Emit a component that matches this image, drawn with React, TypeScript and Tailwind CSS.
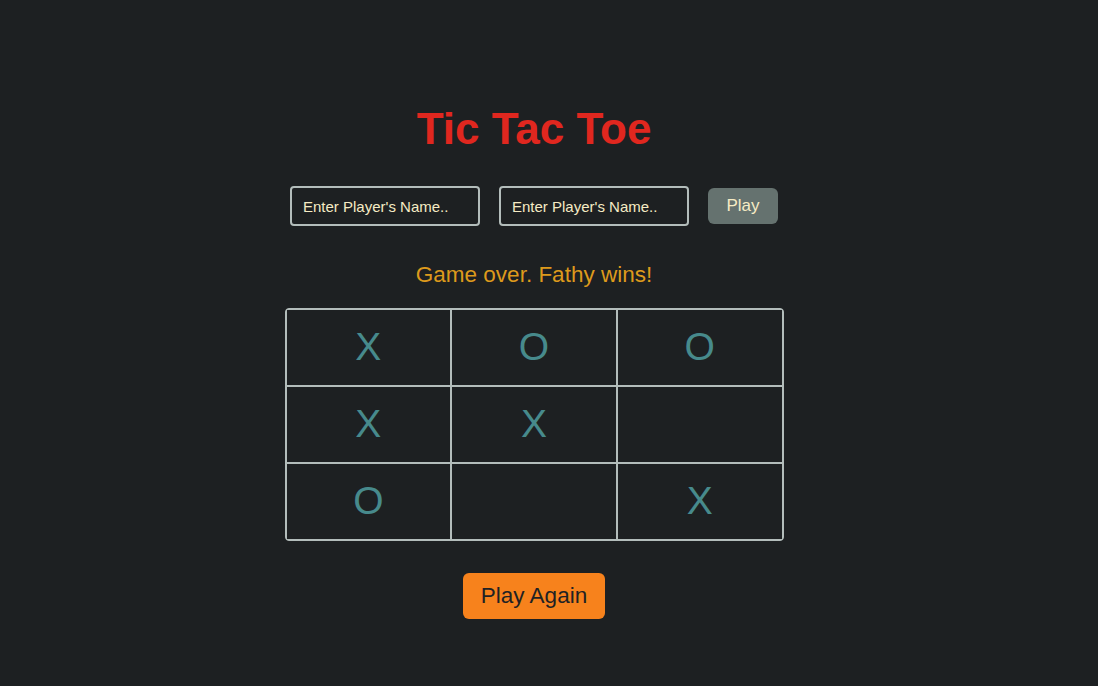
const board = [
  ["X", "O", "O"],
  ["X", "X", ""],
  ["O", "", "X"],
];

export default function App() {
  return (
    <div className="min-h-screen w-full bg-[#1d2022] font-['Liberation_Sans',Arial,sans-serif]">
      <div className="flex flex-col items-center pr-[30px] pt-[104px]">
        <h1 className="text-[44px] font-bold leading-[50px] text-[#e0271f]">Tic Tac Toe</h1>

        <div className="mt-[32px] flex items-center gap-[19px]">
          <input
            className="h-[40px] w-[190px] rounded-[4px] border-2 border-[#b3bdbb] bg-transparent px-[11px] text-[15px] text-[#f5ebc4] placeholder:text-[#f5ebc4] outline-none"
            placeholder="Enter Player's Name.."
          />
          <input
            className="h-[40px] w-[190px] rounded-[4px] border-2 border-[#b3bdbb] bg-transparent px-[11px] text-[15px] text-[#f5ebc4] placeholder:text-[#f5ebc4] outline-none"
            placeholder="Enter Player's Name.."
          />
          <button className="h-[36px] w-[70px] rounded-[6px] bg-[#65726f] text-[17px] text-[#f5ebc4]">
            Play
          </button>
        </div>

        <p className="mt-[36px] text-[22.5px] leading-[26px] text-[#dd9a1c]">Game over. Fathy wins!</p>

        <div className="mt-[20px] grid w-[499px] grid-cols-3 gap-[2px] overflow-hidden rounded-[4px] border border-[#b3bdbb] bg-[#b3bdbb] p-px">
          {board.flat().map((v, i) => (
            <div
              key={i}
              className="flex h-[75px] items-center justify-center bg-[#1d2022] text-[39px] text-[#478a8c]"
            >
              {v}
            </div>
          ))}
        </div>

        <button className="mt-[32px] h-[46px] w-[142px] rounded-[6px] bg-[#f7821c] text-[22.5px] text-[#1f2224]">
          Play Again
        </button>
      </div>
    </div>
  );
}
